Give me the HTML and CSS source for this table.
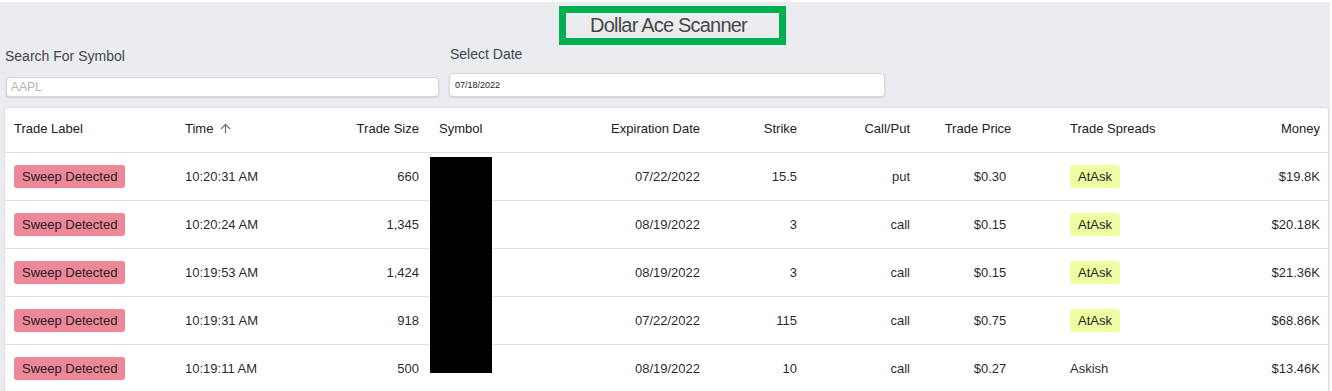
FILE: index.html
```html
<!DOCTYPE html>
<html lang="en">
<head>
<meta charset="utf-8">
<title>Dollar Ace Scanner</title>
<link rel="stylesheet" href="styles.css">
</head>
<body>
<div class="page">
  <header class="title-row">
    <div class="title-box">Dollar Ace Scanner</div>
  </header>

  <section class="filters">
    <div class="filter filter-search">
      <label class="filter-label">Search For Symbol</label>
      <input class="input input-search" type="text" placeholder="AAPL">
    </div>
    <div class="filter filter-date">
      <label class="filter-label">Select Date</label>
      <div class="input input-date">07/18/2022</div>
    </div>
  </section>

  <div class="grid-card">
    <div class="grid-row grid-head">
      <div class="cell left first"><span class="head-title">Trade Label</span><span class="head-icon hidden"></span></div>
      <div class="cell left"><span class="head-title">Time</span>
        <span class="head-icon"><svg viewBox="0 0 24 24" width="15" height="15"><path d="M4 12l1.41 1.41L11 7.83V20h2V7.83l5.58 5.59L20 12l-8-8-8 8z" fill="#757575"/></svg></span></div>
      <div class="cell right"><span class="head-title">Trade Size</span></div>
      <div class="cell left"><span class="head-title">Symbol</span></div>
      <div class="cell right"><span class="head-title">Expiration Date</span></div>
      <div class="cell right"><span class="head-title">Strike</span></div>
      <div class="cell right"><span class="head-title">Call/Put</span></div>
      <div class="cell center"><span class="head-title">Trade Price</span><span class="head-icon hidden"></span></div>
      <div class="cell left"><span class="head-title">Trade Spreads</span></div>
      <div class="cell right money"><span class="head-title">Money</span></div>
    </div>

    <div class="grid-row">
      <div class="cell left first"><span class="badge badge-sweep">Sweep Detected</span></div>
      <div class="cell left">10:20:31 AM</div>
      <div class="cell right">660</div>
      <div class="cell left"></div>
      <div class="cell right">07/22/2022</div>
      <div class="cell right">15.5</div>
      <div class="cell right">put</div>
      <div class="cell center">$0.30</div>
      <div class="cell left"><span class="badge badge-ask">AtAsk</span></div>
      <div class="cell right money">$19.8K</div>
    </div>

    <div class="grid-row">
      <div class="cell left first"><span class="badge badge-sweep">Sweep Detected</span></div>
      <div class="cell left">10:20:24 AM</div>
      <div class="cell right">1,345</div>
      <div class="cell left"></div>
      <div class="cell right">08/19/2022</div>
      <div class="cell right">3</div>
      <div class="cell right">call</div>
      <div class="cell center">$0.15</div>
      <div class="cell left"><span class="badge badge-ask">AtAsk</span></div>
      <div class="cell right money">$20.18K</div>
    </div>

    <div class="grid-row">
      <div class="cell left first"><span class="badge badge-sweep">Sweep Detected</span></div>
      <div class="cell left">10:19:53 AM</div>
      <div class="cell right">1,424</div>
      <div class="cell left"></div>
      <div class="cell right">08/19/2022</div>
      <div class="cell right">3</div>
      <div class="cell right">call</div>
      <div class="cell center">$0.15</div>
      <div class="cell left"><span class="badge badge-ask">AtAsk</span></div>
      <div class="cell right money">$21.36K</div>
    </div>

    <div class="grid-row">
      <div class="cell left first"><span class="badge badge-sweep">Sweep Detected</span></div>
      <div class="cell left">10:19:31 AM</div>
      <div class="cell right">918</div>
      <div class="cell left"></div>
      <div class="cell right">07/22/2022</div>
      <div class="cell right">115</div>
      <div class="cell right">call</div>
      <div class="cell center">$0.75</div>
      <div class="cell left"><span class="badge badge-ask">AtAsk</span></div>
      <div class="cell right money">$68.86K</div>
    </div>

    <div class="grid-row">
      <div class="cell left first"><span class="badge badge-sweep">Sweep Detected</span></div>
      <div class="cell left">10:19:11 AM</div>
      <div class="cell right">500</div>
      <div class="cell left"></div>
      <div class="cell right">08/19/2022</div>
      <div class="cell right">10</div>
      <div class="cell right">call</div>
      <div class="cell center">$0.27</div>
      <div class="cell left">Askish</div>
      <div class="cell right money">$13.46K</div>
    </div>

    <div class="redact"></div>
  </div>
</div>
</body>
</html>
```

FILE: styles.css
```css
* { box-sizing: border-box; }

html, body {
  margin: 0;
  padding: 0;
  background: #ffffff;
  font-family: "Liberation Sans", Arial, sans-serif;
}

.page {
  margin: 2px 2px 0 0;
  height: 389px;
  background: #ebecf0;
  overflow: hidden;
}

/* ---------- title ---------- */
.title-row {
  display: flex;
  justify-content: center;
  padding-top: 4px;
}

.title-box {
  margin-left: 15px;
  height: 39px;
  border: 7px solid #00b050;
  padding: 0 32px 0 24px;
  font-size: 20px;
  line-height: 24px;
  letter-spacing: -0.8px;
  color: #474747;
  white-space: nowrap;
}

/* ---------- filters ---------- */
.filters {
  display: grid;
  grid-template-columns: 444px 444px;
  padding-left: 5px;
  height: 52px;
}

.filter {
  display: flex;
  flex-direction: column;
  align-items: flex-start;
}

.filter-label {
  font-size: 14px;
  line-height: 16px;
  color: #3f4650;
}

.filter-search .filter-label { margin-top: 3px; }
.filter-date .filter-label { margin-top: 1px; margin-left: 1px; }

.input {
  background: #ffffff;
  border: 1px solid #d6d6d6;
  border-radius: 4px;
  box-shadow: 0 1px 2px rgba(0, 0, 0, 0.12);
  font-family: "Liberation Sans", Arial, sans-serif;
  outline: none;
}

.input-search {
  margin-top: 13px;
  margin-left: 1px;
  width: 433px;
  height: 20px;
  padding: 0 4px;
  font-size: 12px;
  color: #333;
}

.input-search::placeholder { color: #b3b3b3; }

.input-date {
  margin-top: 11px;
  width: 436px;
  height: 24px;
  padding: 0 5px;
  font-size: 9px;
  line-height: 22px;
  color: #222;
}

/* ---------- data grid ---------- */
.grid-card {
  position: relative;
  margin: 10px 1px 0 4px;
  height: 290px;
  background: #ffffff;
  border: 1px solid #e0e0e0;
  border-bottom: none;
  border-radius: 4px 4px 0 0;
  font-size: 13px;
  color: rgba(0, 0, 0, 0.87);
}

.grid-row {
  display: grid;
  grid-template-columns: 170px 125px 129px 131px 150px 97px 113px 140px 140px 1fr;
  height: 48px;
  border-bottom: 1px solid #e0e0e0;
}

.grid-head {
  height: 45px;
  padding-bottom: 3px;
}

.grid-row:last-of-type { border-bottom: none; }

.cell {
  display: flex;
  align-items: center;
  padding: 0 10px;
  white-space: nowrap;
  min-width: 0;
}

.cell.first { padding-left: 9px; }
.cell.left { justify-content: flex-start; }
.cell.right { justify-content: flex-end; }
.cell.center { justify-content: center; }
.cell.money { padding-right: 8px; }

.head-title { color: #212121; }

.head-icon {
  display: inline-flex;
  align-items: center;
  margin-left: 5px;
  width: 19px;
  height: 15px;
}

.head-icon.hidden { visibility: hidden; }

.badge {
  display: inline-block;
  height: 23px;
  line-height: 23px;
  padding: 0 8px;
  border-radius: 3px;
  color: #222;
}

.badge-sweep { background: #ee8798; }
.badge-ask { background: #effea2; }

.redact {
  position: absolute;
  left: 425px;
  top: 49px;
  width: 62px;
  height: 216px;
  background: #000000;
}
```
